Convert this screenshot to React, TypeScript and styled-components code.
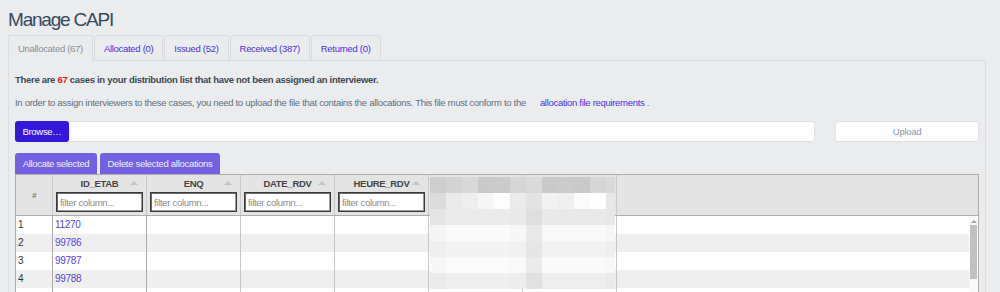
import React from 'react';
import styled, { createGlobalStyle } from 'styled-components';

const GlobalStyle = createGlobalStyle`
  html, body {
    margin: 0;
    padding: 0;
    background: #ebecee;
    font-family: "Liberation Sans", Arial, sans-serif;
    font-size: 9.5px;
    letter-spacing: -0.3px;
  }
`;

const Page = styled.div`
  padding: 8px 14px 0 8px;
`;

const Title = styled.h1`
  margin: 0 0 3px;
  font-size: 19px;
  letter-spacing: -1.2px;
  line-height: 24px;
  font-weight: 400;
  color: #34495e;
`;

const TabBar = styled.div`
  display: flex;
  gap: 1px;
  border-bottom: 1px solid #d9dbde;
  height: 25px;
`;

const Tab = styled.div<{ active?: boolean }>`
  display: flex;
  align-items: center;
  padding: 0 9px;
  margin-bottom: -1px;
  color: ${p => (p.active ? '#8a8f96' : '#4b2fdf')};
  border: 1px solid #d9dbde;
  border-bottom-color: ${p => (p.active ? '#ebecee' : '#d9dbde')};
  border-radius: 3px 3px 0 0;
  background: #ebecee;
  cursor: pointer;
`;

const Panel = styled.div`
  border: 1px solid #dcdee1;
  border-top: none;
  padding: 11px 6px 0 6px;
`;

const Lead = styled.p`
  margin: 0;
  line-height: 16px;
  font-weight: 700;
  color: #3d4852;
`;

const Count = styled.span`
  color: #f01818;
`;

const Info = styled.p`
  margin: 7px 0 0;
  line-height: 16px;
  color: #5f6f80;
`;

const Link = styled.a`
  color: #4b2fdf;
  text-decoration: none;
  margin-left: 14px;
`;

const UploadRow = styled.div`
  display: flex;
  gap: 20px;
  margin-top: 10px;
  height: 21px;
`;

const FileGroup = styled.div`
  flex: 1;
  display: flex;
`;

const BrowseButton = styled.button`
  width: 54px;
  border: none;
  border-radius: 3px;
  background: #3517d8;
  color: #fff;
  font: inherit;
  letter-spacing: inherit;
  padding: 0;
  position: relative;
  z-index: 1;
`;

const FileInput = styled.div`
  flex: 1;
  background: #fff;
  border: 1px solid #dfe1e4;
  border-left: none;
  border-radius: 0 3px 3px 0;
`;

const UploadButton = styled.button`
  width: 144px;
  background: #fff;
  border: 1px solid #e0e2e5;
  border-radius: 3px;
  color: #8d99a8;
  font: inherit;
  letter-spacing: inherit;
`;

const ActionBar = styled.div`
  display: flex;
  gap: 3px;
  margin-top: 11px;
`;

const ActionButton = styled.button<{ w: number }>`
  width: ${p => p.w}px;
  height: 21px;
  border: none;
  border-radius: 3px 3px 0 0;
  background: #7461e2;
  color: #f1eeff;
  font: inherit;
  letter-spacing: inherit;
  padding: 0;
  white-space: nowrap;
`;

const Grid = styled.div`
  position: relative;
  border: 1px solid #aeaeae;
  border-bottom: none;
`;

const HeaderRow = styled.div`
  display: flex;
  height: 40px;
  background: #e4e4e4;
  border-bottom: 1px solid #aeaeae;
`;

const HeadCell = styled.div<{ w?: number }>`
  ${p => (p.w ? `width: ${p.w}px;` : 'flex: 1;')}
  box-sizing: border-box;
  border-right: ${p => (p.w ? '1px solid #c9c9c9' : 'none')};
  display: flex;
  flex-direction: column;
  position: relative;
`;

const IndexHead = styled(HeadCell)`
  align-items: center;
  justify-content: center;
  color: #777;
  font-style: italic;
  font-weight: 700;
  font-size: 8px;
`;

const ColTitle = styled.div`
  height: 17px;
  line-height: 17px;
  text-align: center;
  font-weight: 700;
  color: #444;
`;

const SortArrow = styled.span`
  position: absolute;
  right: 8px;
  top: 6px;
  width: 0;
  height: 0;
  border-left: 4px solid transparent;
  border-right: 4px solid transparent;
  border-bottom: 4px solid #c4c4c4;
`;

const Filter = styled.input`
  margin: 0 3px;
  height: 20px;
  box-sizing: border-box;
  border: 1px solid #3a3a3a;
  box-shadow: inset 1px 1px 0 #6a6a6a, inset -1px -1px 0 #9a9a9a;
  padding: 0 3px;
  font: inherit;
  letter-spacing: inherit;
  background: #fff;
  &::placeholder {
    color: #8a8a8a;
  }
`;

const Body = styled.div`
  display: flex;
  height: 80px;
  overflow: hidden;
`;

const Rows = styled.div`
  flex: 1;
`;

const Row = styled.div<{ odd: boolean }>`
  display: flex;
  height: 18px;
  background: ${p => (p.odd ? '#efefef' : '#fff')};
`;

const Cell = styled.div<{ w?: number; dark?: boolean }>`
  ${p => (p.w ? `width: ${p.w}px;` : 'flex: 1;')}
  box-sizing: border-box;
  border-right: ${p => (p.w ? `1px solid ${p.dark ? '#a9a9a9' : '#c6c6c6'}` : 'none')};
  padding: 0 3px 0 2px;
  line-height: 18px;
  font-size: 10px;
  color: #333;
  white-space: nowrap;
  overflow: hidden;
`;

const IdLink = styled.a`
  color: #5b44e4;
  text-decoration: none;
`;

const ScrollTrack = styled.div`
  width: 9px;
  background: #fafafa;
  display: flex;
  flex-direction: column;
  align-items: center;
`;

const ScrollUp = styled.span`
  margin-top: 4px;
  width: 0;
  height: 0;
  border-left: 3px solid transparent;
  border-right: 3px solid transparent;
  border-bottom: 3px solid #a3a3a3;
`;

const ScrollThumb = styled.div`
  margin-top: 2px;
  width: 7px;
  height: 54px;
  background: #c1c1c1;
`;

const Mosaic = styled.svg`
  position: absolute;
  left: 414px;
  top: 2px;
`;

const tabs = [
  { label: 'Unallocated (67)', active: true },
  { label: 'Allocated (0)' },
  { label: 'Issued (52)' },
  { label: 'Received (387)' },
  { label: 'Returned (0)' },
];

const columns = ['ID_ETAB', 'ENQ', 'DATE_RDV', 'HEURE_RDV', '', ''];
const ids = ['11270', '99786', '99787', '99788', ''];

const mosaicRows = [
  'cecece d3d3d3 d8d8d8 cacaca cbcbcb d6d6d6 dadada c9c9c9 cbcbcb c9c9c9 d6d6d6 d9d9d9',
  'dcdcdc ebebeb eeeeee f6f6f6 fdfdfd ebebeb e3e3e3 f2f2f2 efefef fbfbfb fefefe e8e8e8',
  'e5e5e5 ebebeb ebebeb ebebeb ebebeb e9e9e9 dfdfdf e9e9e9 e9e9e9 e9e9e9 e9e9e9 e7e7e7',
  'f5f5f5 fafafa fafafa fafafa fafafa f7f7f7 e9e9e9 f9f9f9 f9f9f9 f9f9f9 f9f9f9 f6f6f6',
  'efefef f3f3f3 f3f3f3 f3f3f3 f3f3f3 f1f1f1 e6e6e6 f2f2f2 f2f2f2 f2f2f2 f2f2f2 efefef',
  'f7f7f7 fbfbfb fbfbfb fbfbfb fbfbfb f9f9f9 ebebeb fafafa fafafa fafafa fafafa f8f8f8',
  'ebebeb efefef efefef efefef efefef ededed e1e1e1 eeeeee eeeeee eeeeee eeeeee ebebeb',
].map(r => r.split(' '));

const App: React.FC = () => {
  return (
    <Page>
      <GlobalStyle />
      <Title>Manage CAPI</Title>
      <TabBar>
        {tabs.map(t => (
          <Tab key={t.label} active={t.active}>{t.label}</Tab>
        ))}
      </TabBar>
      <Panel>
        <Lead>
          There are <Count>67</Count> cases in your distribution list that have not been assigned an interviewer.
        </Lead>
        <Info>
          In order to assign interviewers to these cases, you need to upload the file that contains the allocations. This file must conform to the
          <Link href="#">allocation file requirements</Link> .
        </Info>
        <UploadRow>
          <FileGroup>
            <BrowseButton>Browse…</BrowseButton>
            <FileInput />
          </FileGroup>
          <UploadButton>Upload</UploadButton>
        </UploadRow>
        <ActionBar>
          <ActionButton w={82}>Allocate selected</ActionButton>
          <ActionButton w={120}>Delete selected allocations</ActionButton>
        </ActionBar>
        <Grid>
          <HeaderRow>
            <IndexHead w={37}>#</IndexHead>
            {columns.map((c, i) => (
              <HeadCell key={i} w={94}>
                {c && (
                  <>
                    <ColTitle>{c}</ColTitle>
                    <SortArrow />
                    <Filter placeholder="filter column..." />
                  </>
                )}
              </HeadCell>
            ))}
            <HeadCell />
          </HeaderRow>
          <Body>
            <Rows>
              {ids.map((id, r) => (
                <Row key={r} odd={r % 2 === 1}>
                  <Cell w={37} dark>{id && r + 1}</Cell>
                  <Cell w={94} dark>{id && <IdLink href="#">{id}</IdLink>}</Cell>
                  {columns.slice(1).map((_, i) => (
                    <Cell key={i} w={94} />
                  ))}
                  <Cell />
                </Row>
              ))}
            </Rows>
            <ScrollTrack>
              <ScrollUp />
              <ScrollThumb />
            </ScrollTrack>
          </Body>
          <Mosaic width={185} height={112}>
            {mosaicRows.map((row, y) =>
              row.map((c, x) => (
                <rect key={`${x}-${y}`} x={x * 16} y={y * 16} width={16} height={16} fill={`#${c}`} />
              ))
            )}
          </Mosaic>
        </Grid>
      </Panel>
    </Page>
  );
};

export default App;
